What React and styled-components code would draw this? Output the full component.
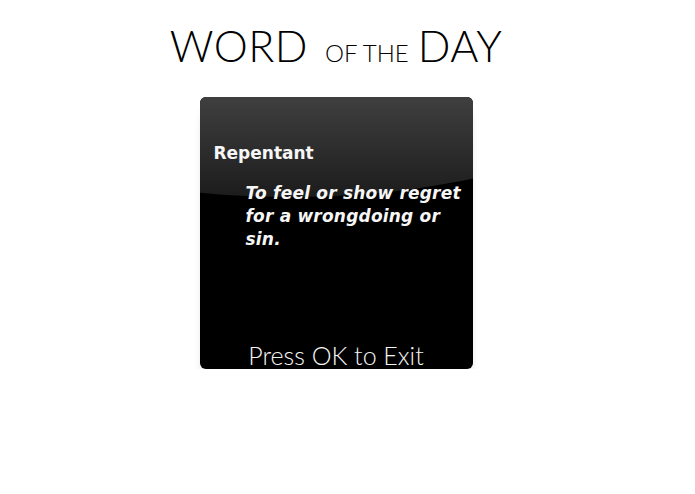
import React from "react";
import styled, { createGlobalStyle } from "styled-components";

const GlobalStyle = createGlobalStyle`
  html, body {
    margin: 0;
    padding: 0;
    background: #ffffff;
  }
`;

const Page = styled.main`
  width: 672px;
  display: flex;
  flex-direction: column;
  align-items: center;
  padding-top: 24px;
`;

const Title = styled.h1`
  margin: 0;
  font-family: "Lato", "DejaVu Sans", sans-serif;
  font-weight: 300;
  color: #000;
  display: flex;
  align-items: baseline;
  line-height: 1;
`;

const Big = styled.span`
  font-size: 43px;
  letter-spacing: 0.5px;
`;

const Small = styled.span`
  font-size: 24px;
  margin: 0 9px 0 17px;
`;

const Card = styled.section`
  position: relative;
  overflow: hidden;
  margin-top: 30px;
  width: 273px;
  height: 272px;
  border-radius: 6px;
  background: #000;
  box-shadow: 0 12px 10px -6px rgba(0, 0, 0, 0.35);
  display: flex;
  flex-direction: column;
  padding: 46px 0 0 14px;
  box-sizing: border-box;

  &::before {
    content: "";
    position: absolute;
    left: -346px;
    top: -300px;
    width: 872px;
    height: 400px;
    border-radius: 50%;
    background: linear-gradient(180deg, #3e3e3e 76%, #1c1c1c 100%);
  }
`;

const Word = styled.h2`
  position: relative;
  margin: 0;
  font-family: "DejaVu Sans", sans-serif;
  font-weight: bold;
  font-size: 17px;
  color: #f6f6f6;
`;

const Meaning = styled.p`
  position: relative;
  margin: 19px 0 0 32px;
  width: 228px;
  font-family: "DejaVu Sans", sans-serif;
  font-weight: bold;
  font-style: italic;
  font-size: 17px;
  line-height: 23px;
  letter-spacing: 0.2px;
  color: #f6f6f6;
`;

const Exit = styled.div`
  position: relative;
  margin-top: auto;
  margin-left: -14px;
  margin-bottom: -1px;
  text-align: center;
  font-family: "Lato", "DejaVu Sans", sans-serif;
  font-weight: 300;
  font-size: 25px;
  color: #f4f4f4;
`;

export default function App() {
  return (
    <>
      <GlobalStyle />
      <Page>
        <Title>
          <Big>WORD</Big>
          <Small>OF THE</Small>
          <Big>DAY</Big>
        </Title>
        <Card>
          <Word>Repentant</Word>
          <Meaning>To feel or show regret for a wrongdoing or sin.</Meaning>
          <Exit>Press OK to Exit</Exit>
        </Card>
      </Page>
    </>
  );
}
